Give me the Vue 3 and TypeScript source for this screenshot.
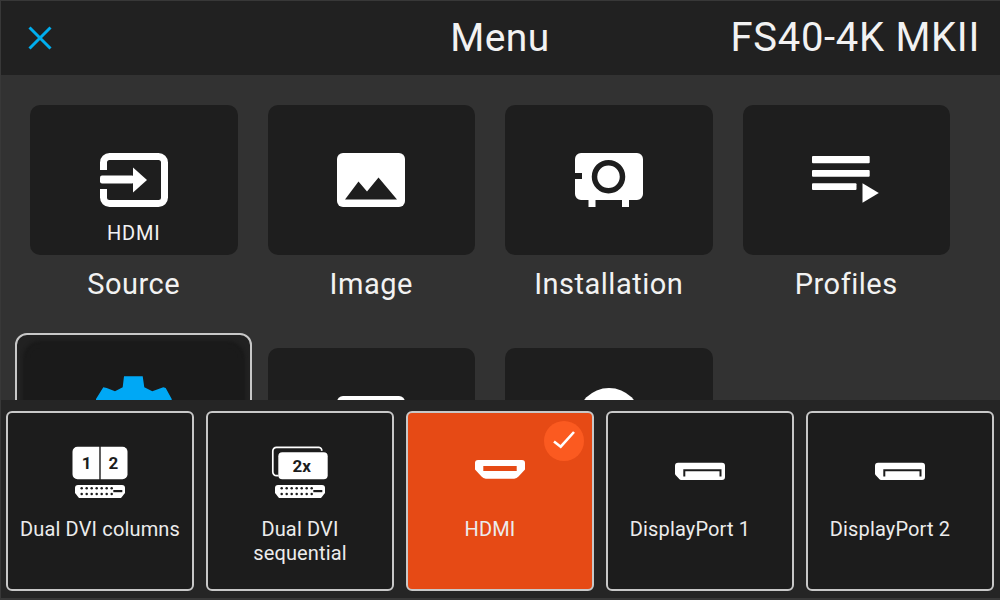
<script setup lang="ts">
interface Tile {
  id: string
  label?: string
  note?: string
  selected?: boolean
}

interface Input {
  id: string
  lines: string[]
  active?: boolean
  shifted?: boolean
}

const tiles: Tile[] = [
  { id: 'source', label: 'Source', note: 'HDMI' },
  { id: 'image', label: 'Image' },
  { id: 'installation', label: 'Installation' },
  { id: 'profiles', label: 'Profiles' },
  { id: 'system', selected: true },
  { id: 'picture' },
  { id: 'info' }
]

const inputs: Input[] = [
  { id: 'columns', lines: ['Dual DVI columns'] },
  { id: 'sequential', lines: ['Dual DVI', 'sequential'] },
  { id: 'hdmi', lines: ['HDMI'], active: true, shifted: true },
  { id: 'dp', lines: ['DisplayPort 1'], shifted: true },
  { id: 'dp', lines: ['DisplayPort 2'], shifted: true }
]

const dots = [0, 1, 2, 3, 4, 5, 6]
</script>

<template>
  <div class="screen">
    <header class="topbar">
      <svg class="close" width="24" height="24" viewBox="0 0 24 24">
        <path d="M1.5 1.5l21 21M22.5 1.5l-21 21" stroke="#00aeef" stroke-width="3" fill="none" />
      </svg>
      <h1 class="title">Menu</h1>
      <div class="model">FS40-4K MKII</div>
    </header>

    <main class="grid">
      <div v-for="tile in tiles" :key="tile.id" class="item">
        <div class="tile" :class="{ 'tile-selected': tile.selected }">
          <svg v-if="tile.id === 'source'" class="icon" width="68" height="54" viewBox="0 0 68 54">
            <path d="M3.5 17V9.500a6 6 0 0 1 6-6h49a6 6 0 0 1 6 6v35a6 6 0 0 1-6 6h-49a6 6 0 0 1-6-6V36" fill="none" stroke="#fff" stroke-width="7" />
            <rect x="0" y="22.5" width="34" height="8" rx="2" fill="#fff" />
            <path d="M33 14.5L47 27 33 39.5z" fill="#fff" />
          </svg>
          <svg v-else-if="tile.id === 'image' || tile.id === 'picture'" class="icon" width="68" height="54" viewBox="0 0 68 54">
            <rect width="68" height="54" rx="6" fill="#fff" />
            <path d="M8 46.5L21.5 28.5l8.5 10 11.5-14 18.5 22z" fill="#1e1e1e" />
          </svg>
          <svg v-else-if="tile.id === 'installation'" class="icon" width="68" height="54" viewBox="0 0 68 54">
            <path d="M6 0h56a6 6 0 0 1 6 6v35a6 6 0 0 1-6 6h-8v7h-7v-7H20.500v7h-7v-7H6a6 6 0 0 1-6-6V26h7v-6H0V6a6 6 0 0 1 6-6z" fill="#fff" />
            <circle cx="33.500" cy="23.700" r="14" fill="#fff" stroke="#1e1e1e" stroke-width="5.500" />
          </svg>
          <svg v-else-if="tile.id === 'profiles'" class="icon" width="68" height="54" viewBox="0 0 68 54">
            <rect x="0" y="3" width="57.700" height="7.300" rx="1" fill="#fff" />
            <rect x="0" y="17" width="57.700" height="6.700" rx="1" fill="#fff" />
            <rect x="0" y="30.300" width="44.500" height="6.700" rx="1" fill="#fff" />
            <path d="M50.500 30.300L66.800 40 50.500 49.700z" fill="#fff" />
          </svg>
          <svg v-else-if="tile.id === 'system'" class="icon icon-gear" width="88" height="60" viewBox="0 0 88 60">
            <path d="M6 26L13.300 14.300l3.400.7 8.300 3.300 7.700-4L34 3.300h18.700l1.600 11 8 4 11-4 2.400.7 6 11V60H6z" fill="#00a8f5" />
          </svg>
          <svg v-else class="icon icon-round" width="64" height="64" viewBox="0 0 64 64">
            <circle cx="32" cy="32" r="32" fill="#fff" />
          </svg>
          <span v-if="tile.note" class="note">{{ tile.note }}</span>
        </div>
        <div v-if="tile.label" class="label">{{ tile.label }}</div>
      </div>
    </main>

    <section class="sheet">
      <button
        v-for="input in inputs"
        :key="input.lines[0]"
        class="card"
        :class="{ 'card-active': input.active }"
        type="button"
      >
        <span v-if="input.active" class="check">
          <svg width="24" height="20" viewBox="0 0 24 20">
            <path d="M2 10.500l6.700 5.200L22 1" fill="none" stroke="#fff" stroke-width="2.600" />
          </svg>
        </span>

        <svg v-if="input.id === 'columns'" width="60" height="56" viewBox="0 0 60 56">
          <path d="M7.500 1.700h21.800v32.600H7.500a5 5 0 0 1-5-5V6.700a5 5 0 0 1 5-5z" fill="#fff" />
          <path d="M30.700 1.700h21.800a5 5 0 0 1 5 5v22.600a5 5 0 0 1-5 5H30.700z" fill="#fff" />
          <text x="16.700" y="23.500" class="glyph" text-anchor="middle">1</text>
          <text x="43.300" y="23.500" class="glyph" text-anchor="middle">2</text>
          <g>
            <path d="M8 40h44a3 3 0 0 1 3 3v5l-4 5H9l-4-5v-5a3 3 0 0 1 3-3z" fill="#fff" />
            <template v-for="n in dots" :key="n">
              <circle :cx="11.700 + n * 5" cy="43.300" r="1.250" fill="#1c1c1c" />
              <circle :cx="11.700 + n * 5" cy="49" r="1.250" fill="#1c1c1c" />
            </template>
            <rect x="43.300" y="45" width="9" height="2.200" fill="#1c1c1c" />
          </g>
        </svg>

        <svg v-else-if="input.id === 'sequential'" width="60" height="56" viewBox="0 0 60 56">
          <path d="M8.500 30.700h-2a3.700 3.700 0 0 1-3.700-3.700V6a3.700 3.700 0 0 1 3.700-3.700h42.500a3 3 0 0 1 2.700 3.500" fill="none" stroke="#fff" stroke-width="1.700" />
          <rect x="8.300" y="7.300" width="49.400" height="27" rx="4" fill="#fff" />
          <text x="31.700" y="27" class="glyph" text-anchor="middle">2x</text>
          <g>
            <path d="M8 40h44a3 3 0 0 1 3 3v5l-4 5H9l-4-5v-5a3 3 0 0 1 3-3z" fill="#fff" />
            <template v-for="n in dots" :key="n">
              <circle :cx="11.700 + n * 5" cy="43.300" r="1.250" fill="#1c1c1c" />
              <circle :cx="11.700 + n * 5" cy="49" r="1.250" fill="#1c1c1c" />
            </template>
            <rect x="43.300" y="45" width="9" height="2.200" fill="#1c1c1c" />
          </g>
        </svg>

        <svg v-else-if="input.id === 'hdmi'" width="60" height="56" viewBox="0 0 60 56">
          <path d="M8 15h44a3 3 0 0 1 3 3v6.500L48.500 31.500a6 6 0 0 1-4.300 2.200H15.800a6 6 0 0 1-4.300-2.200L5 24.500V18a3 3 0 0 1 3-3z" fill="#fff" />
          <rect x="13.300" y="21" width="33.400" height="5" fill="#e64a15" />
        </svg>

        <svg v-else width="60" height="56" viewBox="0 0 60 56">
          <path d="M8 17.700h44a3 3 0 0 1 3 3V32a3 3 0 0 1-3 3H11a2 2 0 0 1-1.500-.7l-4-4.300a2 2 0 0 1-.5-1.400v-7.900a3 3 0 0 1 3-3z" fill="#fff" />
          <path d="M14.300 31.500V25.300h36.200v6.200" fill="none" stroke="#1c1c1c" stroke-width="2" />
        </svg>

        <span class="card-label" :class="{ 'card-label-shifted': input.shifted }">
          <span v-for="line in input.lines" :key="line" class="card-line">{{ line }}</span>
        </span>
      </button>
    </section>
  </div>
</template>

<style scoped>
.screen {
  position: relative;
  isolation: isolate;
  width: 1000px;
  height: 600px;
  overflow: hidden;
  background: #323232;
  color: #f2f2f2;
  font-family: Roboto, "Liberation Sans", sans-serif;
}

.screen::after {
  content: '';
  position: absolute;
  inset: 0;
  border: solid #383838;
  border-width: 1px 0 2px 1px;
  pointer-events: none;
  z-index: 5;
}

/* Header */
.topbar {
  display: grid;
  grid-template-columns: 1fr auto 1fr;
  align-items: center;
  height: 75px;
  padding: 0 20px;
  background: #212121;
}

.close {
  display: block;
  margin-left: 8px;
}

.title {
  margin: 0;
  font-size: 39px;
  font-weight: 400;
  line-height: 76px;
  letter-spacing: 0.4px;
}

.model {
  justify-self: end;
  font-size: 40px;
  line-height: 76px;
  letter-spacing: 0.7px;
}

/* Menu tiles */
.grid {
  display: grid;
  grid-template-columns: repeat(4, 207.5px);
  column-gap: 30px;
  row-gap: 46.5px;
  padding: 30px 0 0 30px;
}

.item {
  height: 196px;
}

.tile {
  position: relative;
  display: flex;
  flex-direction: column;
  align-items: center;
  height: 150px;
  padding-top: 48px;
  box-sizing: border-box;
  background: #1e1e1e;
  border-radius: 10px;
}

.tile-selected {
  background: #1a1a1a;
  box-shadow: 0 0 3px 7px #1a1a1a;
}

.tile-selected::before {
  content: '';
  position: absolute;
  top: -15px;
  right: -14px;
  bottom: -15px;
  left: -15px;
  z-index: -1;
  background: #212121;
  border: 2px solid #c8c8c8;
  border-radius: 12px;
}

.icon {
  display: block;
  flex: none;
}

.icon-gear {
  margin-top: -22.5px;
}

.icon-round {
  margin-top: -7.5px;
}

.note {
  margin-top: 14px;
  font-size: 20px;
  line-height: 24px;
  letter-spacing: 0.8px;
}

.label {
  margin-top: 12px;
  font-size: 29px;
  line-height: 34px;
  letter-spacing: 0.5px;
  text-align: center;
}

/* Input picker */
.sheet {
  position: absolute;
  left: 0;
  right: 0;
  bottom: 0;
  z-index: 2;
  display: flex;
  gap: 12px;
  height: 200px;
  padding: 11px 6px 9px;
  box-sizing: border-box;
  background: #252525;
}

.card {
  position: relative;
  display: flex;
  flex-direction: column;
  align-items: center;
  width: 188px;
  height: 180px;
  padding: 32px 0 0;
  box-sizing: border-box;
  background: #1c1c1c;
  border: 2px solid #c8c8c8;
  border-radius: 6px;
  color: #ececec;
  font-family: inherit;
}

.card svg {
  display: block;
  flex: none;
}

.card-active {
  background: #e64a15;
}

.card-label {
  display: block;
  margin-top: 16px;
  font-size: 20px;
  line-height: 24px;
  letter-spacing: 0.15px;
  text-align: center;
}

.card-label-shifted {
  padding-right: 20px;
}

.card-line {
  display: block;
  white-space: nowrap;
}

.check {
  position: absolute;
  top: 8px;
  right: 8px;
  display: flex;
  align-items: center;
  justify-content: center;
  width: 40px;
  height: 40px;
  border-radius: 50%;
  background: #fb5a20;
}

.glyph {
  fill: #1c1c1c;
  font-family: Roboto, "Liberation Sans", sans-serif;
  font-size: 17px;
  font-weight: 700;
}
</style>
